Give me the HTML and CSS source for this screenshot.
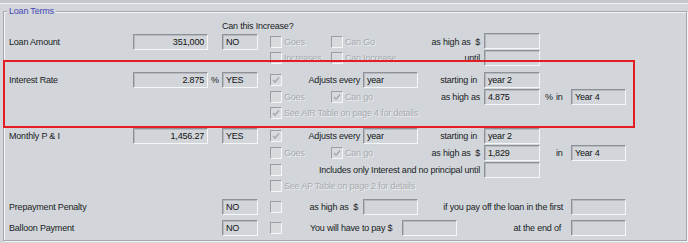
FILE: index.html
```html
<!DOCTYPE html>
<html>

<head>
    <title>Loan Terms</title>
    <link rel="stylesheet" href="styles.css">
</head>

<body>
    <div class="topbar"></div>

    <div class="group">
        <span class="group-title">Loan Terms</span>

        <div class="form">
            <div class="row r-head">
                <span class="c-yn head">Can this Increase?</span>
            </div>

            <!-- Loan amount -->
            <div class="row r-17">
                <span class="c-label">Loan Amount</span>
                <span class="box c-value num">351,000</span>
                <span class="box c-yn">NO</span>
                <span class="check c-cb1"></span>
                <span class="c-t1 dim">Goes</span>
                <span class="check c-cb2"></span>
                <span class="c-t2 dim">Can Go</span>
                <span class="c-lbl2">as high as &nbsp;$</span>
                <span class="box c-in2 up"></span>
            </div>
            <div class="row r-15">
                <span class="check c-cb1"></span>
                <span class="c-t1 dim">Increases</span>
                <span class="check c-cb2"></span>
                <span class="c-t2 dim">Can Increase</span>
                <span class="c-lbl2">until</span>
                <span class="box c-in2"></span>
            </div>
            <div class="gap-6"></div>

            <!-- Interest rate -->
            <div class="row r-17">
                <span class="c-label">Interest Rate</span>
                <span class="box c-value num">2.875</span>
                <span class="c-pct">%</span>
                <span class="box c-yn">YES</span>
                <span class="check c-cb1 on"><svg viewBox="0 0 10 10"><path d="M2 5 L4 7.2 L8 2.5" /></svg></span>
                <span class="c-mid">Adjusts every</span>
                <span class="box c-in1">year</span>
                <span class="c-lbl2 wide">starting in</span>
                <span class="box c-in2">year 2</span>
            </div>
            <div class="row r-17">
                <span class="check c-cb1"></span>
                <span class="c-t1 dim">Goes</span>
                <span class="check c-cb2 on"><svg viewBox="0 0 10 10"><path d="M2 5 L4 7.2 L8 2.5" /></svg></span>
                <span class="c-t2 dim">Can go</span>
                <span class="c-lbl2">as high as</span>
                <span class="box c-in2">4.875</span>
                <span class="c-unit"><span>%</span><span>in</span></span>
                <span class="box c-in3">Year 4</span>
            </div>
            <div class="row r-16">
                <span class="check c-cb1 on"><svg viewBox="0 0 10 10"><path d="M2 5 L4 7.2 L8 2.5" /></svg></span>
                <span class="c-note dim">See AIR Table on page 4 for details</span>
            </div>
            <div class="gap-7"></div>

            <!-- Monthly payment -->
            <div class="row r-16">
                <span class="c-label">Monthly P &amp; I</span>
                <span class="box c-value num">1,456.27</span>
                <span class="box c-yn">YES</span>
                <span class="check c-cb1 on"><svg viewBox="0 0 10 10"><path d="M2 5 L4 7.2 L8 2.5" /></svg></span>
                <span class="c-mid">Adjusts every</span>
                <span class="box c-in1">year</span>
                <span class="c-lbl2 wide">starting in</span>
                <span class="box c-in2">year 2</span>
            </div>
            <div class="row r-17">
                <span class="check c-cb1"></span>
                <span class="c-t1 dim">Goes</span>
                <span class="check c-cb2 on"><svg viewBox="0 0 10 10"><path d="M2 5 L4 7.2 L8 2.5" /></svg></span>
                <span class="c-t2 dim">Can go</span>
                <span class="c-lbl2">as high as &nbsp;$</span>
                <span class="box c-in2">1,829</span>
                <span class="c-unit"><span></span><span>in</span></span>
                <span class="box c-in3">Year 4</span>
            </div>
            <div class="row r-17">
                <span class="check c-cb1"></span>
                <span class="c-long">Includes only Interest and no principal until</span>
                <span class="box c-in2"></span>
            </div>
            <div class="row r-16">
                <span class="check c-cb1"></span>
                <span class="c-note dim">See AP Table on page 2 for details</span>
            </div>
            <div class="gap-4"></div>

            <!-- Penalty and balloon -->
            <div class="row r-18">
                <span class="c-label">Prepayment Penalty</span>
                <span class="box c-yn">NO</span>
                <span class="check c-cb1"></span>
                <span class="c-mid pad5">as high as &nbsp;$</span>
                <span class="box c-in1"></span>
                <span class="c-far">if you pay off the loan in the first</span>
                <span class="box c-in3"></span>
            </div>
            <div class="gap-3"></div>
            <div class="row r-18">
                <span class="c-label">Balloon Payment</span>
                <span class="box c-yn">NO</span>
                <span class="check c-cb1"></span>
                <span class="c-pay"><span>You will have to pay $</span><span class="box pay-box"></span></span>
                <span class="c-end">at the end of</span>
                <span class="box c-in3"></span>
            </div>
        </div>
    </div>

    <div class="highlight"></div>
</body>

</html>
```

FILE: styles.css
```css
body {
    margin: 0;
    width: 688px;
    height: 243px;
    position: relative;
    overflow: hidden;
    background-color: #d2d6da;
    font-family: "Liberation Sans", Arial, sans-serif;
    font-size: 9px;
    letter-spacing: -0.2px;
    color: #202224;
}

.topbar {
    height: 3px;
    background-color: #c4c8cc;
    border-bottom: 1px solid #eef0f2;
}

.group {
    margin: 7px 1px 0 3px;
    height: 230px;
    box-sizing: border-box;
    border: 1px solid #a4a8ac;
    box-shadow: inset 1px 1px 0 #f2f4f6, 1px 1px 0 #f2f4f6;
}

.group-title {
    display: block;
    width: max-content;
    height: 12px;
    line-height: 12px;
    margin: -7px 0 0 3px;
    padding: 0 2px;
    background-color: #d2d6da;
    color: #4646b4;
}

.form {
    display: flex;
    flex-direction: column;
    margin: 2px 0 0 5px;
}

.row {
    display: grid;
    grid-template-columns: 124px 75px 14px 36px 12px 14px 47px 14px 18px 55px 66px 56px 31px 55px;
    align-items: center;
    white-space: nowrap;
}

.r-head { height: 14px; }
.r-15 { height: 15px; }
.r-16 { height: 16px; }
.r-17 { height: 17px; }
.r-18 { height: 18px; }
.gap-7 { height: 7px; }
.gap-6 { height: 6px; }
.gap-4 { height: 4px; }
.gap-3 { height: 3px; }

/* columns */
.c-label { grid-column: 1 / 2; }
.c-value { grid-column: 2 / 3; }
.c-pct { grid-column: 3 / 4; padding-left: 3px; }
.c-yn { grid-column: 4 / 5; }
.c-cb1 { grid-column: 6 / 7; }
.c-t1 { grid-column: 7 / 8; }
.c-cb2 { grid-column: 8 / 9; }
.c-t2 { grid-column: 9 / 11; }
.c-mid { grid-column: 7 / 10; text-align: right; padding-right: 3px; }
.c-mid.pad5 { padding-right: 5px; }
.c-in1 { grid-column: 10 / 11; }
.c-lbl2 { grid-column: 11 / 12; text-align: right; padding-right: 4px; }
.c-lbl2.wide { padding-right: 7px; }
.c-in2 { grid-column: 12 / 13; }
.c-unit { grid-column: 13 / 14; display: flex; padding-left: 5px; }
.c-unit span:first-child { width: 11px; }
.c-in3 { grid-column: 14 / 15; }
.c-note { grid-column: 7 / 13; }
.c-long { grid-column: 7 / 12; text-align: right; padding-right: 4px; }
.c-far { grid-column: 11 / 14; text-align: right; padding-right: 8px; }
.c-end { grid-column: 12 / 14; text-align: right; padding-right: 10px; }
.c-pay { grid-column: 7 / 12; display: flex; align-items: center; padding-left: 26px; gap: 10px; }

.head {
    grid-column: 4 / 8;
}

.dim {
    color: #a7abb0;
    text-shadow: 1px 1px 0 #eceef0;
}

/* sunken boxes */
.box {
    display: block;
    height: 16px;
    line-height: 14px;
    box-sizing: border-box;
    padding: 0 3px;
    border: 1px solid;
    border-color: #8e9296 #f4f6f8 #f4f6f8 #8e9296;
    box-shadow: inset 1px 1px 0 #b6babe;
    color: #111;
}

.num { text-align: right; }
.up { margin-top: -2px; }
.pay-box { width: 55px; }

/* check boxes */
.check {
    display: block;
    width: 12px;
    height: 12px;
    box-sizing: border-box;
    border: 1px solid;
    border-color: #9a9ea2 #f4f6f8 #f4f6f8 #9a9ea2;
    background-color: #d8dbde;
}

.check svg {
    display: block;
    width: 10px;
    height: 10px;
}

.check path {
    fill: none;
    stroke: #a2a6aa;
    stroke-width: 1.3;
}

.highlight {
    position: absolute;
    left: 3px;
    top: 60px;
    width: 632px;
    height: 68px;
    box-sizing: border-box;
    border: 2px solid #e41c24;
}
```
